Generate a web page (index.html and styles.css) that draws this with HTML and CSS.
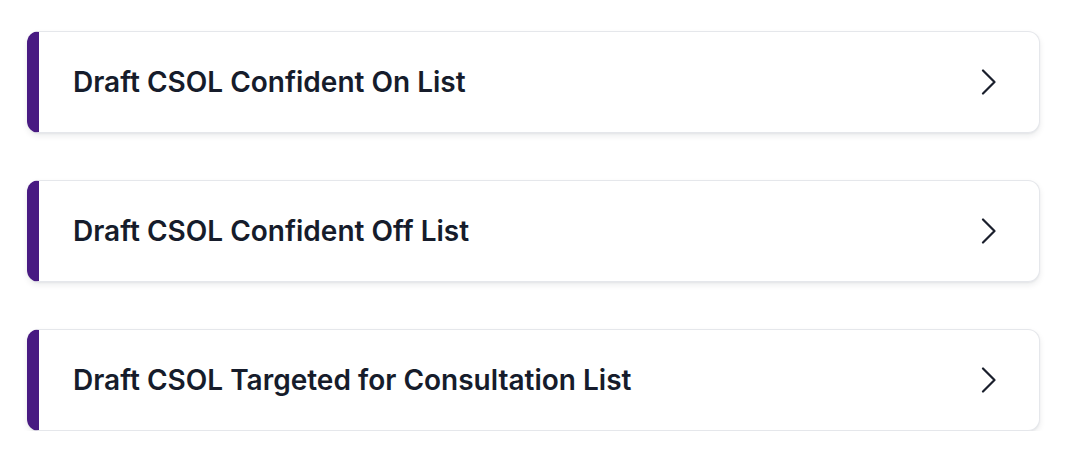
FILE: index.html
```html
<!DOCTYPE html>
<html lang="en">
<head>
<meta charset="utf-8">
<title>Lists</title>
<link rel="stylesheet" href="styles.css">
</head>
<body>
<main class="list">
  <a class="card" href="#">
    <span class="card-title">Draft CSOL Confident On List</span>
    <svg class="chevron" viewBox="0 0 16 26" width="16" height="26" aria-hidden="true"><path d="M2 1.5 L13.5 13 L2 24.5" fill="none" stroke="currentColor" stroke-width="2.2" stroke-linecap="round" stroke-linejoin="round"/></svg>
  </a>
  <a class="card" href="#">
    <span class="card-title">Draft CSOL Confident Off List</span>
    <svg class="chevron" viewBox="0 0 16 26" width="16" height="26" aria-hidden="true"><path d="M2 1.5 L13.5 13 L2 24.5" fill="none" stroke="currentColor" stroke-width="2.2" stroke-linecap="round" stroke-linejoin="round"/></svg>
  </a>
  <a class="card" href="#">
    <span class="card-title">Draft CSOL Targeted for Consultation List</span>
    <svg class="chevron" viewBox="0 0 16 26" width="16" height="26" aria-hidden="true"><path d="M2 1.5 L13.5 13 L2 24.5" fill="none" stroke="currentColor" stroke-width="2.2" stroke-linecap="round" stroke-linejoin="round"/></svg>
  </a>
</main>
</body>
</html>
```
FILE: styles.css
```css
* { box-sizing: border-box; }
html, body { margin: 0; padding: 0; background: #ffffff; }
body { font-family: Inter, "Noto Sans", "Liberation Sans", sans-serif; }
.list {
  display: flex;
  flex-direction: column;
  gap: 47px;
  padding: 31px 40px 0 27px;
}
.card {
  display: flex;
  align-items: center;
  justify-content: space-between;
  height: 102px;
  padding: 0 42px 0 34px;
  background: #ffffff;
  border: 1px solid #e5e7eb;
  border-left: 12px solid #481a82;
  border-radius: 12px;
  box-shadow: 0 3px 6px rgba(17, 24, 39, 0.08), 0 1px 2px rgba(17, 24, 39, 0.05);
  text-decoration: none;
  color: #111827;
}
.card-title {
  font-size: 28px;
  font-weight: 600;
  color: #161c2b;
}
.chevron {
  color: #1a1f2c;
  display: block;
}
```
